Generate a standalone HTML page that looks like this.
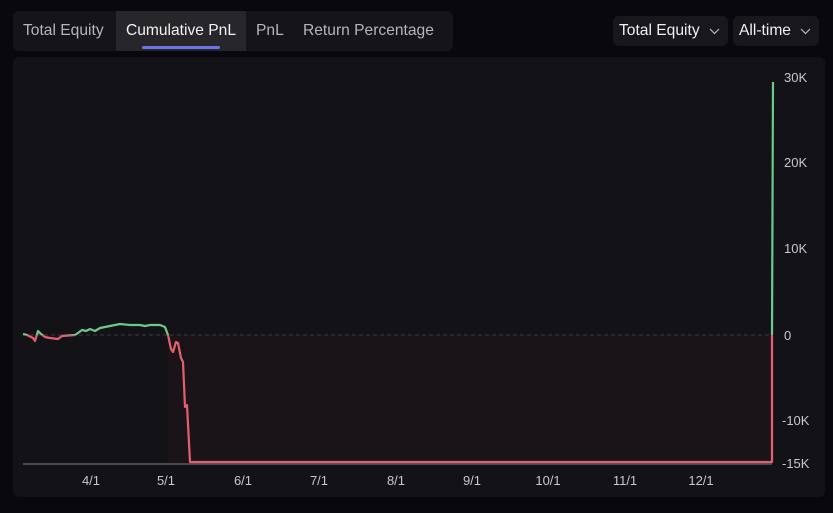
<!DOCTYPE html>
<html><head><style>
body{margin:0;width:833px;height:513px;background:#09090d;font-family:"Liberation Sans",sans-serif;overflow:hidden;position:relative}
.tabs{position:absolute;left:13px;top:11px;width:440px;height:40px;background:#141419;border-radius:6px}
.tab{position:absolute;top:0;height:40px;line-height:40px;color:#b5b5bb;font-size:15.6px}
.act{background:#26262b;color:#f2f2f4}
.ul{position:absolute;left:142px;top:46px;width:78px;height:3px;border-radius:2px;background:#6b73e8}
.dd{position:absolute;top:16px;height:30px;line-height:30px;background:#17171c;border-radius:6px;color:#f0f0f2;font-size:15.6px;padding-left:6px;box-sizing:border-box}
.dd svg{position:absolute;top:12px}
.panel{position:absolute;left:13px;top:57px;width:812px;height:440px;background:#131217;border-radius:6px}
#c{position:absolute;left:0;top:0}
</style></head><body>
<div class="tabs">
<div class="tab" style="left:10px">Total Equity</div>
<div class="tab act" style="left:103px;width:130px;text-align:center">Cumulative PnL</div>
<div class="tab" style="left:243px">PnL</div>
<div class="tab" style="left:290px">Return Percentage</div>
</div>
<div class="ul"></div>
<div class="dd" style="left:613px;width:115px">Total Equity <svg style="left:96px" width="11" height="7"><path d="M1 1L5.5 5.5L10 1" fill="none" stroke="#bbb" stroke-width="1.2"/></svg></div>
<div class="dd" style="left:733px;width:86px">All-time <svg style="left:67px" width="11" height="7"><path d="M1 1L5.5 5.5L10 1" fill="none" stroke="#bbb" stroke-width="1.2"/></svg></div>
<div class="panel"></div>
<svg id="c" width="833" height="513">
<defs>
<clipPath id="up"><rect x="0" y="0" width="833" height="335"/></clipPath>
<clipPath id="dn"><rect x="0" y="335" width="833" height="200"/></clipPath>
</defs>
<rect x="168" y="335" width="604" height="127" fill="#1a1419"/>
<line x1="23" y1="335" x2="772" y2="335" stroke="#3a3a40" stroke-dasharray="4,3"/>
<line x1="23" y1="464" x2="772" y2="464" stroke="#5a5a60" stroke-width="1.5"/>
<g fill="none" stroke-width="2.2" stroke-linejoin="round">
<polyline clip-path="url(#up)" stroke="#6cc98a" points="23,334 27,335 33,338 35,341 38,331 41,334 45,337 50,338 58,339 62,336 75,335 78,333 82,330 86,331 90,329 95,331 100,328 105,327 110,326 120,324 130,325 140,325 145,326 150,325 160,325 165,327 168,335 171,349 173,352 176,342 178,343 181,358 183,362 185,407 187,405 190,462 772,462 772,335 773,82"/>
<polyline clip-path="url(#dn)" stroke="#e5606e" points="23,334 27,335 33,338 35,341 38,331 41,334 45,337 50,338 58,339 62,336 75,335 78,333 82,330 86,331 90,329 95,331 100,328 105,327 110,326 120,324 130,325 140,325 145,326 150,325 160,325 165,327 168,335 171,349 173,352 176,342 178,343 181,358 183,362 185,407 187,405 190,462 772,462 772,335 773,82"/>
</g>
<g fill="#c8c8cc" font-size="13" font-family="Liberation Sans,sans-serif">
<text x="784" y="82">30K</text><text x="784" y="167">20K</text><text x="784" y="253">10K</text><text x="784" y="340">0</text><text x="782" y="425">-10K</text><text x="782" y="468">-15K</text>
</g>
<g fill="#c8c8cc" font-size="13" font-family="Liberation Sans,sans-serif" text-anchor="middle">
<text x="91" y="485">4/1</text><text x="166" y="485">5/1</text><text x="243" y="485">6/1</text><text x="319" y="485">7/1</text><text x="396" y="485">8/1</text><text x="472" y="485">9/1</text><text x="548" y="485">10/1</text><text x="625" y="485">11/1</text><text x="701" y="485">12/1</text>
</g>
</svg>
</body></html>
